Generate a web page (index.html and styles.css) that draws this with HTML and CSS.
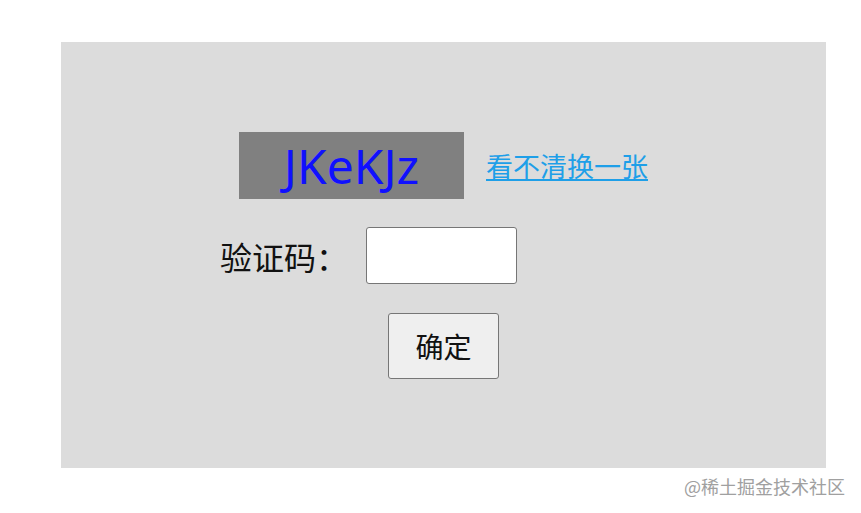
FILE: index.html
```html
<!DOCTYPE html>
<html lang="zh-CN">
<head>
    <meta charset="UTF-8">
    <title>验证码</title>
    <link rel="stylesheet" href="styles.css">
</head>
<body>

<div class="panel">
    <div class="code-row">
        <span class="code">JKeKJz</span>
        <a href="#" class="change">看不清换一张</a>
    </div>
    <div class="input-row">
        <label for="code">验证码：</label>
        <input type="text" id="code">
    </div>
    <div class="btn-row">
        <button>确定</button>
    </div>
</div>

<p class="mark">@稀土掘金技术社区</p>

</body>
</html>
```

FILE: styles.css
```css
body {
    margin: 0;
    background: #fff;
    font-family: "Noto Sans", "Noto Sans CJK SC", sans-serif;
}

.panel {
    margin: 42px 0 0 61px;
    width: 765px;
    height: 426px;
    background-color: #dcdcdc;
    box-sizing: border-box;
    padding-top: 90px;
}

.code-row {
    display: flex;
    justify-content: center;
    align-items: center;
}

.code {
    width: 225px;
    height: 67px;
    background-color: #808080;
    color: #1010ff;
    font-size: 48px;
    line-height: 67px;
    text-align: center;
}

.change {
    margin-left: 22px;
    color: #1e9fe8;
    font-size: 27px;
    font-family: "Noto Sans CJK SC", sans-serif;
}

.input-row {
    display: flex;
    justify-content: center;
    align-items: center;
    margin-top: 28px;
    padding-right: 150px;
}

.input-row label {
    font-size: 32px;
    color: #111;
    font-family: "Noto Sans CJK SC", sans-serif;
    margin-right: 18px;
}

.input-row input {
    width: 151px;
    height: 57px;
    box-sizing: border-box;
    border: 1px solid #767676;
    border-radius: 3px;
    background: #fff;
}

.btn-row {
    display: flex;
    justify-content: center;
    margin-top: 29px;
}

.btn-row button {
    width: 111px;
    height: 66px;
    font-size: 28px;
    font-family: "Noto Sans CJK SC", sans-serif;
    color: #111;
    background-color: #efefef;
    border: 1px solid #767676;
    border-radius: 3px;
}

.mark {
    margin: 5px 16px 0 0;
    text-align: right;
    font-size: 18px;
    color: #a0a0a0;
    font-family: "Noto Sans CJK SC", sans-serif;
}
```
